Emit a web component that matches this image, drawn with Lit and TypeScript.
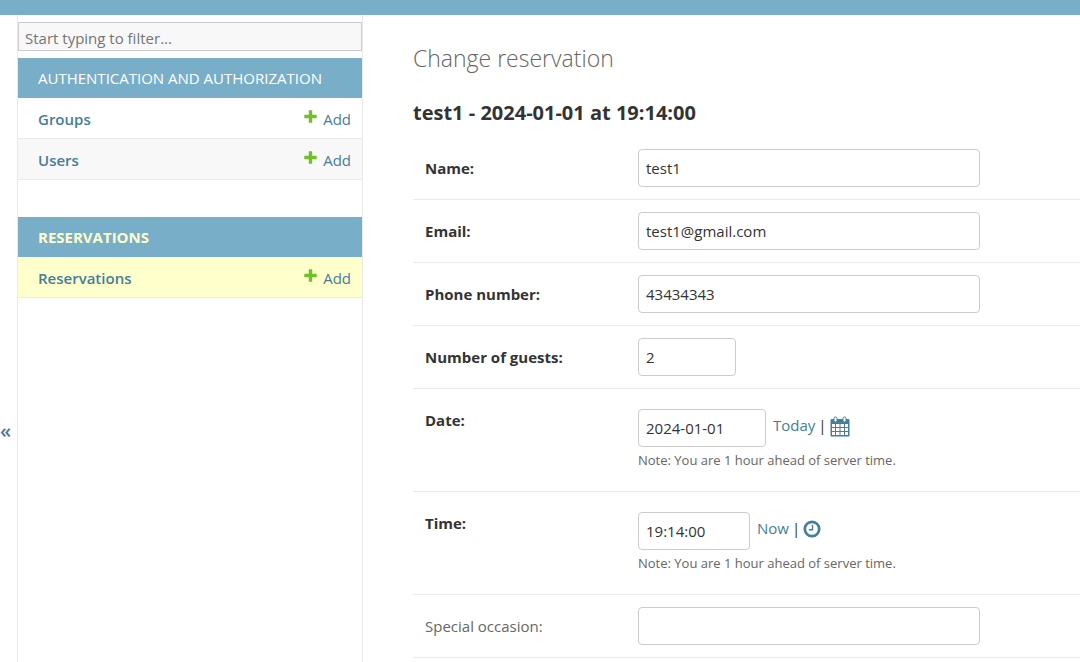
import { LitElement, html, css, svg, nothing } from "lit";
import { customElement, property } from "lit/decorators.js";
import { classMap } from "lit/directives/class-map.js";

interface NavModel { name: string; current?: boolean }
interface NavApp { title: string; current?: boolean; models: NavModel[] }
interface Field {
  id: string;
  label: string;
  value: string;
  size: "wide" | "number" | "date" | "time";
  optional?: boolean;
  shortcut?: string;
  icon?: unknown;
  iconLabel?: string;
}

const NOTE = "Note: You are 1 hour ahead of server time.";

const plusIcon = svg`<svg class="plus" viewBox="0 0 13 13" width="13" height="13" aria-hidden="true">
  <path fill="#70bf2b" d="M4.8 .3h3.4v4.5h4.5v3.4H8.2v4.5H4.8V8.2H.3V4.8h4.5z"/>
</svg>`;

const calendarIcon = svg`<svg viewBox="0 0 20 21" width="20" height="21" aria-hidden="true">
  <rect x=".5" y="3" width="19" height="17.5" rx="1" fill="#447e9b"/>
  <g fill="#fff">
    <path d="M2 8h3v3H2zM6 8h3.5v3H6zM10.5 8H14v3h-3.5zM15 8h3v3h-3z"/>
    <path d="M2 12h3v3H2zM6 12h3.5v3H6zM10.5 12H14v3h-3.5zM15 12h3v3h-3z"/>
    <path d="M2 16h3v3H2zM6 16h3.5v3H6zM10.5 16H14v3h-3.5zM15 16h3v3h-3z"/>
  </g>
  <g fill="#fff" stroke="#447e9b" stroke-width="1">
    <rect x="4" y="1" width="3" height="5" rx="1.4"/>
    <rect x="13" y="1" width="3" height="5" rx="1.4"/>
  </g>
</svg>`;

const clockIcon = svg`<svg viewBox="0 0 18 18" width="18" height="18" aria-hidden="true">
  <circle cx="9" cy="9" r="7.2" fill="#fff" stroke="#447e9b" stroke-width="2.7"/>
  <path d="M9.5 4.8v5H5.8" fill="none" stroke="#447e9b" stroke-width="1.4"/>
</svg>`;

const NAV: NavApp[] = [
  { title: "Authentication and Authorization", models: [{ name: "Groups" }, { name: "Users" }] },
  { title: "Reservations", current: true, models: [{ name: "Reservations", current: true }] },
];

const FIELDS: Field[] = [
  { id: "name", label: "Name:", value: "test1", size: "wide" },
  { id: "email", label: "Email:", value: "test1@gmail.com", size: "wide" },
  { id: "phone", label: "Phone number:", value: "43434343", size: "wide" },
  { id: "guests", label: "Number of guests:", value: "2", size: "number" },
  { id: "date", label: "Date:", value: "2024-01-01", size: "date", shortcut: "Today", icon: calendarIcon, iconLabel: "Choose a date" },
  { id: "time", label: "Time:", value: "19:14:00", size: "time", shortcut: "Now", icon: clockIcon, iconLabel: "Choose a time" },
  { id: "occasion", label: "Special occasion:", value: "", size: "wide", optional: true },
];

const base = css`
  * { box-sizing: border-box; }
  a { color: #447e9b; text-decoration: none; }
  input { font: inherit; }
`;

@customElement("nav-sidebar")
export class NavSidebar extends LitElement {
  @property({ attribute: false }) apps: NavApp[] = [];

  static styles = [base, css`
    :host {
      display: block;
      flex: 0 0 346px;
      padding-top: 7px;
      border: solid #eaeaea;
      border-width: 0 1px;
    }
    .filter {
      display: block;
      width: 100%;
      height: 29px;
      margin-bottom: 7px;
      padding: 3px 6px 0;
      border: 1px solid #ccc;
      border-radius: 0;
      background: #f8f8f8;
      color: #333;
      outline: 0;
    }
    .filter::placeholder { color: #757575; opacity: 1; }
    .module { width: 100%; margin-bottom: 37px; border-spacing: 0; }
    .caption {
      height: 40px;
      padding: 0 20px;
      background: #79aec8;
      line-height: 40px;
      text-align: left;
      text-transform: uppercase;
    }
    .caption a { color: #fff; }
    .caption.current a { color: #ffc; font-weight: 700; }
    .model, .action {
      height: 41px;
      padding: 2px 11px 0 20px;
      border-bottom: 1px solid #eaeaea;
      font-weight: 600;
      text-align: left;
    }
    .action { padding-left: 0; font-weight: 400; text-align: right; }
    .row:nth-child(even) { background: #f8f8f8; }
    .row.current { background: #ffc; }
    .plus { margin-right: 6px; vertical-align: 2px; }
  `];

  render() {
    return html`
      <input class="filter" type="search" placeholder="Start typing to filter..." aria-label="Filter navigation items">
      ${this.apps.map((app) => html`
        <table class="module">
          <caption class=${classMap({ caption: true, current: !!app.current })}><a href="#">${app.title}</a></caption>
          <tbody>
            ${app.models.map((m) => html`
              <tr class=${classMap({ row: true, current: !!m.current })}>
                <th class="model" scope="row"><a href="#">${m.name}</a></th>
                <td class="action"><a href="#">${plusIcon}Add</a></td>
              </tr>`)}
          </tbody>
        </table>`)}
    `;
  }
}

@customElement("reservation-form")
export class ReservationForm extends LitElement {
  @property({ attribute: false }) fields: Field[] = [];

  static styles = [base, css`
    :host { display: block; }
    .row {
      display: flex;
      align-items: flex-start;
      padding: 12px;
      border-bottom: 1px solid #eaeaea;
    }
    .row.tall { padding-bottom: 21px; }
    .label {
      flex: 0 0 213px;
      padding-top: 9px;
      color: #333;
      font-weight: 700;
      line-height: 20px;
    }
    .label.optional { color: #666; font-weight: 400; }
    .control { flex: 1; min-width: 0; }
    .tall .control { padding-top: 8px; }
    .line { display: flex; align-items: center; gap: 7px; }
    .input {
      height: 38px;
      padding: 0 7px;
      border: 1px solid #ccc;
      border-radius: 4px;
      background: #fff;
      color: #333;
      outline: 0;
    }
    .wide { width: 342px; max-width: 100%; }
    .number { width: 98px; }
    .date { width: 128px; }
    .time { width: 112px; }
    .shortcuts { display: flex; align-items: center; gap: 3px; padding-bottom: 6px; }
    .icon { display: flex; padding-top: 2px; }
    .help { margin: 4px 0 0; color: #666; font-size: 13px; line-height: 19px; }
  `];

  private renderField(f: Field) {
    return html`
      <div class=${classMap({ row: true, tall: !!f.shortcut })}>
        <label class=${classMap({ label: true, optional: !!f.optional })} for=${f.id}>${f.label}</label>
        <div class="control">
          <div class="line">
            <input class="input ${f.size}" id=${f.id} type="text" .value=${f.value}>
            ${f.shortcut ? html`
              <span class="shortcuts">
                <a href="#">${f.shortcut}</a><span>|</span>
                <a class="icon" href="#" aria-label=${f.iconLabel}>${f.icon}</a>
              </span>` : nothing}
          </div>
          ${f.shortcut ? html`<p class="help">${NOTE}</p>` : nothing}
        </div>
      </div>`;
  }

  render() {
    return html`<form>${this.fields.map((f) => this.renderField(f))}</form>`;
  }
}

@customElement("app-root")
export class AppRoot extends LitElement {
  static styles = [base, css`
    :host {
      display: flex;
      flex-direction: column;
      min-height: 100vh;
      background: #fff;
      color: #333;
      font: 15px/20px "Open Sans", "Noto Sans", sans-serif;
    }
    .bar { height: 15px; background: #79aec8; }
    .main { display: flex; flex: 1; }
    .toggle {
      flex: 0 0 17px;
      align-self: flex-start;
      margin: 400px 0 0;
      padding: 0;
      border: 0;
      background: none;
      color: #447e9b;
      font: inherit;
      font-size: 20px;
      font-weight: 600;
      line-height: 32px;
      text-align: left;
    }
    .content { flex: 1; min-width: 0; padding: 28px 0 0 50px; }
    .title { margin: 0 0 26px; color: #666; font-size: 23px; font-weight: 300; line-height: 30px; }
    .subtitle { margin: 0 0 11px; font-size: 20px; font-weight: 700; line-height: 27px; }
  `];

  render() {
    return html`
      <header class="bar"></header>
      <div class="main">
        <button class="toggle" type="button" aria-label="Toggle navigation">«</button>
        <nav-sidebar .apps=${NAV}></nav-sidebar>
        <main class="content">
          <h1 class="title">Change reservation</h1>
          <h2 class="subtitle">test1 - 2024-01-01 at 19:14:00</h2>
          <reservation-form .fields=${FIELDS}></reservation-form>
        </main>
      </div>`;
  }
}
